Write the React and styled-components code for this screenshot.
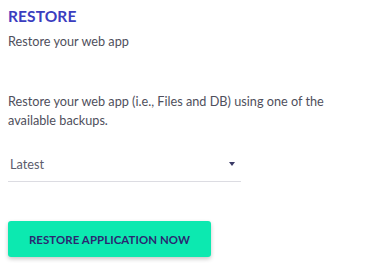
import React from "react";
import styled, { createGlobalStyle } from "styled-components";

const Global = createGlobalStyle`
  html, body { margin: 0; padding: 0; background: #fff; }
  body { font-family: "Lato", "Open Sans", sans-serif; }
`;

const Page = styled.div`
  padding: 7px 8px;
  display: flex;
  flex-direction: column;
`;

const Title = styled.h2`
  margin: 0;
  font-size: 15.5px;
  line-height: 18px;
  font-weight: 700;
  color: #3b3dbf;
  letter-spacing: 0.1px;
`;

const Subtitle = styled.p`
  margin: 8px 0 0;
  font-size: 12.7px;
  line-height: 16px;
  color: #4f4f5c;
`;

const Text = styled.p`
  margin: 43px 0 0;
  font-size: 12.7px;
  line-height: 18.5px;
  color: #4f4f5c;
  max-width: 330px;
`;

const Select = styled.div`
  margin-top: 17px;
  width: 233px;
  height: 36px;
  display: flex;
  align-items: center;
  justify-content: space-between;
  border-bottom: 1px solid #dcdce2;
  box-sizing: border-box;
  padding: 0 6px 0 2px;
  font-size: 12.7px;
  color: #5c5c6c;
`;

const Arrow = styled.span`
  width: 0;
  height: 0;
  border-left: 3.5px solid transparent;
  border-right: 3.5px solid transparent;
  border-top: 4px solid #3a3a66;
`;

const Button = styled.button`
  margin-top: 39px;
  width: 203px;
  height: 36px;
  border: none;
  border-radius: 3px;
  background: #0ce9b0;
  color: #2a2870;
  font-family: "Lato", sans-serif;
  font-size: 11.4px;
  font-weight: 700;
  letter-spacing: 0.1px;
  box-shadow: 0 2px 4px rgba(0, 0, 0, 0.22);
  cursor: pointer;
  align-self: flex-start;
`;

export default function App() {
  return (
    <>
      <Global />
      <Page>
        <Title>RESTORE</Title>
        <Subtitle>Restore your web app</Subtitle>
        <Text>
          Restore your web app (i.e., Files and DB) using one of the available backups.
        </Text>
        <Select>
          <span>Latest</span>
          <Arrow />
        </Select>
        <Button>RESTORE APPLICATION NOW</Button>
      </Page>
    </>
  );
}
